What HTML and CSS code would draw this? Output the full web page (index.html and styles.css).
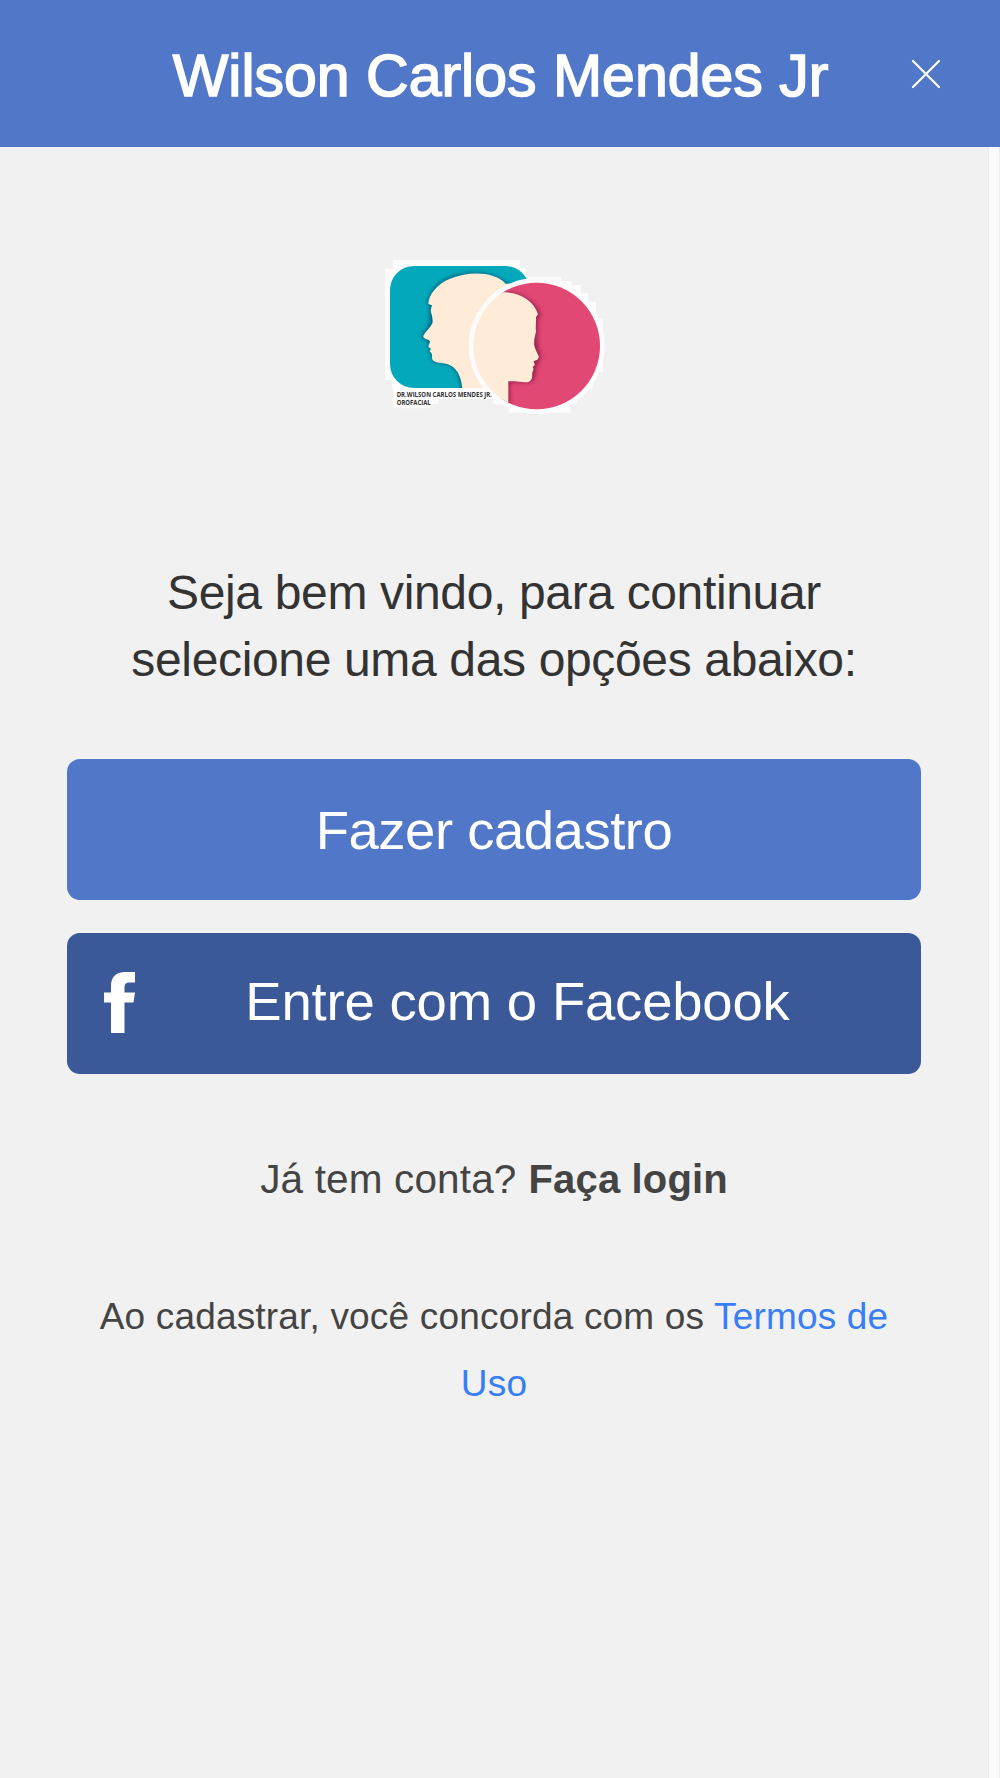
FILE: index.html
```html
<!DOCTYPE html>
<html lang="pt-BR">
<head>
    <meta charset="UTF-8">
    <title>Wilson Carlos Mendes Jr</title>
    <link rel="stylesheet" href="styles.css">
</head>
<body>

<header class="topbar">
    <h1>Wilson Carlos Mendes Jr</h1>
    <button class="close" aria-label="Fechar">
        <svg width="30" height="30" viewBox="0 0 30 30"><path d="M2 2L28 28M28 2L2 28"/></svg>
    </button>
</header>

<div class="page">
    <main class="content">
        <svg class="logo" width="248" height="180" viewBox="0 0 744 540">
            <defs>
                <clipPath id="square"><rect x="60" y="63" width="418" height="366" rx="72"/></clipPath>
                <clipPath id="circle"><circle cx="500" cy="303" r="190"/></clipPath>
                <filter id="shadow" x="-20%" y="-20%" width="140%" height="140%">
                    <feGaussianBlur stdDeviation="6"/>
                </filter>
            </defs>
            <!-- fundo branco recortado -->
            <path class="back" d="M68 45H450V68H468V95H575V108H605V120H633V145H655V170H678V220H699V382H680V405H668V432H640V455H622V475H602V503H418V478H370V462H205V478H182V490H70V430H66V405H46V72H68Z"/>
            <!-- quadrado com o primeiro perfil -->
            <g clip-path="url(#square)">
                <rect class="teal" x="60" y="63" width="420" height="366"/>
                <path class="teal-shadow" filter="url(#shadow)" d="M405 112C370 78 290 76 235 98C200 113 174 145 171 178L179 182V225C180 238 172 248 154 272C154 281 164 282 172 286L178 318L185 330L186 348C195 357 222 352 238 360C260 371 273 400 272 440H420V115Z"/>
                <path class="skin" d="M407 116C372 78 292 78 238 102C203 117 176 147 175 177L186 181L182 195C184 208 190 222 187 235C181 249 166 260 160 272C158 283 175 282 179 287C182 295 173 300 176 307L183 311L179 319C190 327 184 334 187 343C192 356 218 353 234 358C262 368 277 400 277 440H440V116Z"/>
            </g>
            <!-- circulo com o segundo perfil -->
            <circle class="ring" cx="500" cy="303" r="204"/>
            <g clip-path="url(#circle)">
                <rect class="pink" x="395" y="100" width="305" height="400"/>
                <path class="pink-shadow" filter="url(#shadow)" d="M405 142C455 143 500 170 512 210L502 225C506 260 495 290 513 335C511 348 501 350 499 368L492 405C484 416 450 411 419 412V500H405Z"/>
                <path class="skin" d="M250 142H405C451 143 492 168 504 208L498 216C499 230 496 243 498 260C488 299 492 304 506 334C508 346 490 346 491 351L495 359L488 366C495 376 484 379 487 389C486 412 475 413 456 411C440 408 425 408 415 409V500H250Z"/>
            </g>
            <text class="logo-text" x="80" y="455" textLength="286" lengthAdjust="spacingAndGlyphs">DR.WILSON CARLOS MENDES JR.</text>
            <text class="logo-text" x="80" y="479" textLength="102" lengthAdjust="spacingAndGlyphs">OROFACIAL</text>
        </svg>

        <p class="welcome">Seja bem vindo, para continuar<br>selecione uma das opções abaixo:</p>

        <div class="buttons">
            <button class="btn">Fazer cadastro</button>
            <button class="btn btn-facebook">
                <svg class="fb-icon" width="31" height="61" viewBox="0 0 31 61">
                    <path d="M31 0V10.500H25C22 10.500 20.500 12 20.500 15V20.500H31L29.500 30.500H20.500V61H7V30.500H0V20.500H7V14C7 5 12 0 21 0Z"/>
                </svg>
                Entre com o Facebook
            </button>
        </div>

        <p class="login"><span>Já tem conta?</span><b>Faça login</b></p>
        <p class="terms">Ao cadastrar, você concorda com os <a href="#">Termos de Uso</a></p>
    </main>
    <div class="scrolltrack"></div>
</div>

</body>
</html>
```

FILE: styles.css
```css
* {
    box-sizing: border-box;
}

body {
    margin: 0;
    min-height: 1778px;
    display: flex;
    flex-direction: column;
    background: #f1f1f1;
    color: #444;
    font-family: "Liberation Sans", Arial, sans-serif;
}

h1, p {
    margin: 0;
    font-weight: normal;
}

button {
    border: none;
    padding: 0;
    font-family: inherit;
    color: #fff;
    cursor: pointer;
}

.topbar {
    position: relative;
    height: 147px;
    background: #5177c8;
    color: #fff;
    text-align: center;
}

.topbar h1 {
    padding-left: 1px;
    font-size: 59px;
    line-height: 152px;
    -webkit-text-stroke: 1.6px #fff;
}

.close {
    position: absolute;
    top: 59px;
    right: 59px;
    height: 30px;
    background: none;
}

.close svg {
    display: block;
    fill: none;
    stroke: #fff;
    stroke-width: 2.2;
    stroke-linecap: round;
}

.page {
    flex: 1;
    display: flex;
}

.content {
    flex: 1;
    padding: 98px 67px 0;
    text-align: center;
}

.scrolltrack {
    width: 12px;
    background: #fafafa;
    border-left: 1px solid #e9e9e9;
    border-right: 1px solid #ededed;
}

/* logo */
.logo {
    display: block;
    margin: 0 auto;
}

.back, .ring {
    fill: #fcfcfc;
}

.teal {
    fill: #03a9ba;
}

.teal-shadow {
    fill: #04647f;
}

.skin {
    fill: #feecd9;
}

.pink {
    fill: #e14874;
}

.pink-shadow {
    fill: #96204e;
}

.logo-text {
    font-family: "Open Sans", sans-serif;
    font-size: 20px;
    font-weight: 700;
    fill: #333;
}

/* textos */
.welcome {
    margin-top: 134px;
    font-size: 48px;
    line-height: 67px;
    letter-spacing: -0.35px;
    color: #333;
    white-space: nowrap;
}

.login {
    display: flex;
    justify-content: center;
    gap: 12px;
    margin-top: 72px;
    font-size: 40.5px;
    line-height: 67px;
    letter-spacing: 0.15px;
}

.login b {
    font-size: 40px;
}

.terms {
    margin-top: 70px;
    font-size: 37px;
    line-height: 67px;
    letter-spacing: 0.18px;
}

.terms a {
    color: #387ef5;
    text-decoration: none;
}

/* botoes */
.buttons {
    display: flex;
    flex-direction: column;
    gap: 33px;
    margin-top: 66px;
}

.btn {
    position: relative;
    height: 141px;
    padding-top: 2px;
    border-radius: 13px;
    background: #5177c8;
    font-size: 54.5px;
    letter-spacing: -0.5px;
}

.btn-facebook {
    padding: 0 0 4px 47px;
    background: #3b5998;
    letter-spacing: -0.2px;
}

.fb-icon {
    position: absolute;
    left: 37px;
    top: 39px;
    fill: #fff;
}
```
